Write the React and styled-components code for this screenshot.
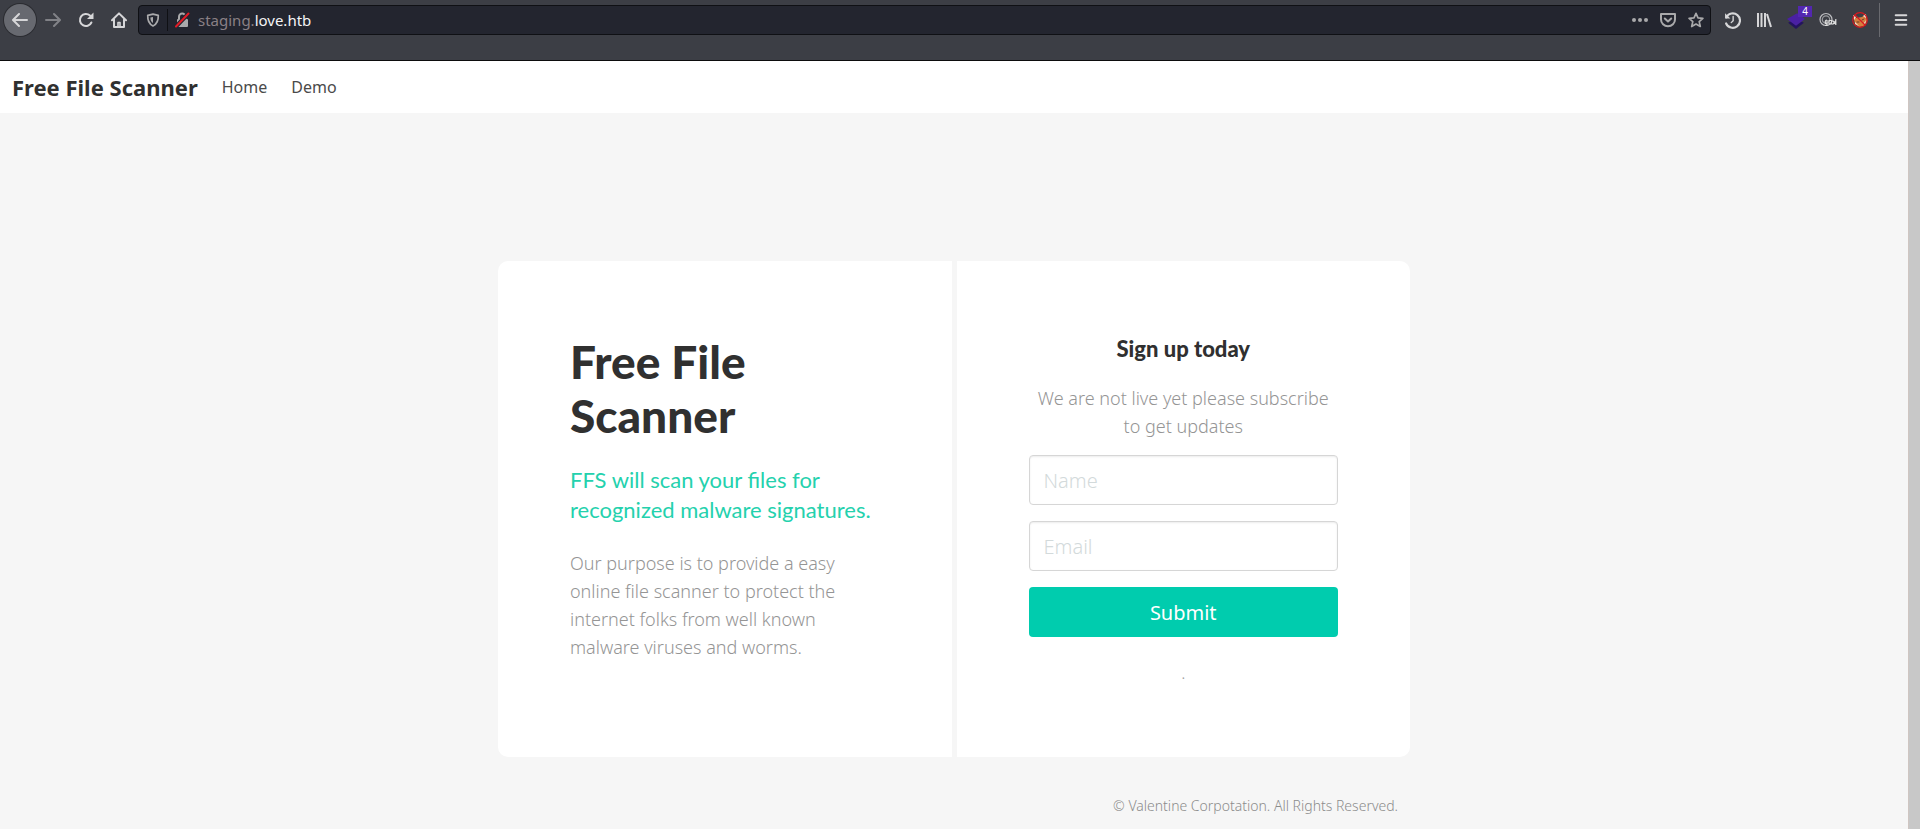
import React from "react";
import styled, { createGlobalStyle } from "styled-components";

const GlobalStyle = createGlobalStyle`
  * { box-sizing: border-box; }
  body { margin: 0; background: #f6f6f6; font-family: "Noto Sans", "Open Sans", sans-serif; color: #363636; }
  h1, h2, h3, p { margin: 0; }
  button { font: inherit; border: 0; background: none; padding: 0; cursor: pointer; }
`;

const Window = styled.div`
  min-height: 100vh;
  display: flex;
  flex-direction: column;
`;

const Toolbar = styled.header`
  display: flex;
  align-items: center;
  height: 61px;
  padding: 0 3px 20px 4px;
  background: #3c3e45;
  border-bottom: 1px solid #0c0c0d;
`;

const ToolButton = styled.button`
  display: flex;
  align-items: center;
  justify-content: center;
  flex: none;
  width: 32px;
  height: 32px;
  border-radius: 50%;
  position: relative;
  color: ${(p) => (p.$dim ? "#818287" : "#d6d6d8")};
  background: ${(p) => (p.$round ? "#676970" : "transparent")};
  box-shadow: ${(p) => (p.$round ? "0 0 0 1px #2b2c31" : "none")};
  svg { display: block; }
`;

const Navigation = styled.div`
  display: flex;
  align-items: center;
  gap: 1px;
`;

const Address = styled.div`
  flex: 1;
  display: flex;
  align-items: center;
  height: 30px;
  margin: 0 5px 0 3px;
  background: #23252f;
  border: 1px solid #0f1014;
  border-radius: 4px;
  color: #a9a9ab;
`;

const AddressButton = styled.button`
  display: flex;
  align-items: center;
  justify-content: center;
  width: 28px;
  height: 28px;
  color: inherit;
`;

const Split = styled.span`
  width: 1px;
  height: ${(p) => p.$height};
  margin: ${(p) => p.$margin || "0"};
  background: ${(p) => p.$color};
`;

const Url = styled.span`
  flex: 1;
  padding-left: 2px;
  font-size: 15px;
  line-height: 20px;
  color: #8a8085;
  b { font-weight: 400; color: #f4f4f6; }
`;

const Extensions = styled.div`
  display: flex;
  align-items: center;
  color: #d6d6d8;
`;

const Badge = styled.span`
  position: absolute;
  top: 2px;
  right: 0;
  width: 14px;
  height: 11px;
  background: #5327b0;
  color: #ffffff;
  font-size: 10px;
  line-height: 11px;
  text-align: center;
`;

const Viewport = styled.div`
  flex: 1;
  display: flex;
`;

const Scrollbar = styled.div`
  width: 12px;
  background: #c8c8c8;
  border-left: 1px solid #cfc6c2;
`;

const Page = styled.div`
  flex: 1;
  min-width: 0;
`;

const Navbar = styled.nav`
  display: flex;
  align-items: center;
  height: 52px;
  background: #ffffff;
`;

const Brand = styled.a`
  padding: 0 12px;
  font-size: 22px;
  line-height: 36px;
  font-weight: 700;
  color: #303030;
  text-decoration: none;
`;

const NavLink = styled.a`
  padding: 0 12px;
  font-size: 16px;
  line-height: 24px;
  color: #4a4a4a;
  text-decoration: none;
`;

const Hero = styled.main`
  max-width: 912px;
  margin: 0 auto;
  padding-top: 148px;
`;

const Columns = styled.div`
  display: grid;
  grid-template-columns: 1fr 1fr;
  gap: 5px;
  border-radius: 10px;
  overflow: hidden;
`;

const Panel = styled.section`
  padding: 74px 72px 70px;
  background: #ffffff;
  text-align: ${(p) => (p.$center ? "center" : "left")};
`;

const Title = styled.h1`
  font-family: Lato, sans-serif;
  font-size: 46px;
  line-height: 54px;
  font-weight: 900;
  color: #303030;
`;

const Subtitle = styled.h2`
  margin: 22px 0 24px;
  font-family: Lato, sans-serif;
  font-size: 22px;
  line-height: 30px;
  font-weight: 400;
  color: #24d1ad;
`;

const FormTitle = styled.h3`
  margin-bottom: 22px;
  font-family: Lato, sans-serif;
  font-size: 22px;
  line-height: 27px;
  font-weight: 900;
  color: #303030;
`;

const Text = styled.p`
  font-size: 18px;
  line-height: 28px;
  font-weight: 300;
  color: #959595;
`;

const Form = styled.form`
  display: flex;
  flex-direction: column;
  gap: 16px;
  margin: 15px 0 26px;
`;

const Field = styled.input`
  width: 100%;
  height: 50px;
  padding: 0 14px;
  border: 1px solid #d6d6d6;
  border-radius: 4px;
  box-shadow: inset 0 1px 2px rgba(10, 10, 10, 0.08);
  font-family: inherit;
  font-size: 20px;
  font-weight: 300;
  color: #363636;
  &::placeholder { color: #d3dadb; opacity: 1; }
`;

const Submit = styled.button`
  && {
    height: 50px;
    border-radius: 4px;
    background: #00ccae;
    color: #ffffff;
    font-size: 20px;
  }
`;

const Small = styled.p`
  font-size: 12px;
  line-height: 24px;
  color: #a0a0a0;
`;

const Footer = styled.footer`
  padding: 37px 12px 11px;
  text-align: right;
  font-size: 14px;
  line-height: 24px;
  font-weight: 300;
  color: #8c8c8c;
`;

const Icon = ({ size = 16, children }) => (
  <svg width={size} height={size} viewBox="0 0 16 16" fill="none" stroke="currentColor" strokeWidth="2" strokeLinecap="round" strokeLinejoin="round" aria-hidden="true">
    {children}
  </svg>
);

export default function App() {
  return (
    <>
      <GlobalStyle />
      <Window>
        <Toolbar>
          <Navigation>
            <ToolButton $round aria-label="Back">
              <Icon><path d="M15 8H1.5M7 2 1 8l6 6" /></Icon>
            </ToolButton>
            <ToolButton $dim aria-label="Forward">
              <Icon><path d="M1 8h13.5M9 2l6 6-6 6" /></Icon>
            </ToolButton>
            <ToolButton aria-label="Reload">
              <Icon>
                <path d="M13.4 10.5A6 6 0 1 1 12 3.6l2 2" />
                <path d="M15.500.5v6.500H9z" fill="currentColor" stroke="none" />
              </Icon>
            </ToolButton>
            <ToolButton aria-label="Home">
              <Icon>
                <path d="M1 8.3 8 1.4l7 6.900M3 7.500V15h10V7.500" />
                <path d="M7 15v-4.500h2V15" strokeWidth="1.600" />
              </Icon>
            </ToolButton>
          </Navigation>
          <Address>
            <AddressButton aria-label="Tracking protection">
              <Icon size={14}>
                <path d="M8 1.200 14 2.600c.3 6-1.300 10-6 12.200C3.300 12.600 1.700 8.600 2 2.600z" />
                <path d="M8 4.500v7C5.800 10 5 7.800 5 5z" fill="currentColor" stroke="none" />
              </Icon>
            </AddressButton>
            <Split $height="22px" $color="#0f1014" />
            <AddressButton aria-label="Connection is not secure">
              <Icon>
                <path d="M5 7V4.800a3.200 3.200 0 0 1 6.400 0V7" />
                <rect x="3" y="7" width="11" height="8" rx="1" fill="currentColor" stroke="none" />
                <path d="M2 14.500 14.500 1.500" stroke="#23252f" strokeWidth="4" />
                <path d="M2 14.500 14.500 1.500" stroke="#e31b26" />
              </Icon>
            </AddressButton>
            <Url>staging.<b>love.htb</b></Url>
            <AddressButton aria-label="Page actions">
              <Icon>
                <g fill="currentColor" stroke="none">
                  <circle cx="2" cy="8" r="2" />
                  <circle cx="8" cy="8" r="2" />
                  <circle cx="14" cy="8" r="2" />
                </g>
              </Icon>
            </AddressButton>
            <AddressButton aria-label="Save to Pocket">
              <Icon>
                <path d="M1 2h14v5.500a7 6.700 0 0 1-14 0z" />
                <path d="m4.800 6.500 3.200 3 3.200-3" />
              </Icon>
            </AddressButton>
            <AddressButton aria-label="Bookmark">
              <Icon>
                <path d="m8 1.400 2 4.500 4.900.5-3.700 3.200 1.100 4.900L8 12l-4.300 2.500 1.100-4.900L1.100 6.400 6 5.900z" strokeWidth="1.700" />
              </Icon>
            </AddressButton>
          </Address>
          <Extensions>
            <ToolButton aria-label="History">
              <Icon size={17}>
                <path d="M2.200 5A6.800 6.800 0 1 1 2 10.800" />
                <path d="M1 1.200V6h5z" fill="currentColor" stroke="none" />
                <path d="M8.600 4.200v4L6.800 10" strokeWidth="1.300" />
              </Icon>
            </ToolButton>
            <ToolButton aria-label="Library">
              <Icon>
                <path d="M2 1v14M5.500 1v14M9 1v14M11 2l4 13" strokeLinecap="butt" />
              </Icon>
            </ToolButton>
            <ToolButton aria-label="Page technologies">
              <Icon size={18}>
                <g stroke="none">
                  <path d="M1 10.500 8 7l7 3.500-7 5.500z" fill="#24135f" />
                  <path d="M0 7 9 2l7 5-8 6z" fill="#4a20a3" />
                </g>
              </Icon>
              <Badge>4</Badge>
            </ToolButton>
            <ToolButton aria-label="Proxy switcher">
              <svg width="18" height="16" viewBox="0 0 18 16" aria-hidden="true">
                <circle cx="7" cy="7.500" r="6" fill="none" stroke="#bdbdc0" strokeWidth="1.200" />
                <circle cx="7" cy="7.500" r="3.700" fill="none" stroke="#98999d" strokeWidth="1.200" />
                <path d="M8 8a1.800 2 0 1 0 0 4V8v5.500H6M10 12V8.500h2.500V12H10M13.500 8.500l3.500 4m0-4-3.500 4M16.800 7v6" fill="none" stroke="#dcdcdc" strokeWidth="1.200" />
              </svg>
            </ToolButton>
            <ToolButton aria-label="Proxy off">
              <Icon>
                <path d="m1 3 3 3 6-1 4-3 1 7-3 5-5 1-4-3z" fill="#d6803f" stroke="none" />
                <path d="m1 3 3 2-2 3zm10 1 3-2v4zM3 10l4 4-4-2zm9 1 2-3-1 5z" fill="#f3ded0" stroke="none" />
                <path d="M5 10h2m3-2 2-1" stroke="#6b3827" strokeWidth="1" />
                <circle cx="8" cy="8" r="7.300" stroke="#d9171f" strokeWidth="1.200" />
                <path d="m3 3 10 10" stroke="#d9171f" strokeWidth="1.200" />
              </Icon>
            </ToolButton>
            <Split $height="34px" $margin="0 5px 0 3px" $color="#696a6f" />
            <ToolButton aria-label="Menu">
              <Icon size={14}><path d="M2 2.500h12M2 8h12M2 13.500h12" strokeWidth="2.400" /></Icon>
            </ToolButton>
          </Extensions>
        </Toolbar>
        <Viewport>
          <Page>
            <Navbar>
              <Brand href="#">Free File Scanner</Brand>
              <NavLink href="#home">Home</NavLink>
              <NavLink href="#demo">Demo</NavLink>
            </Navbar>
            <Hero>
              <Columns>
                <Panel>
                  <Title>Free File Scanner</Title>
                  <Subtitle>FFS will scan your files for recognized malware signatures.</Subtitle>
                  <Text>
                    Our purpose is to provide a easy online file scanner to protect the internet folks from well known
                    malware viruses and worms.
                  </Text>
                </Panel>
                <Panel $center>
                  <FormTitle>Sign up today</FormTitle>
                  <Text>We are not live yet please subscribe to get updates</Text>
                  <Form onSubmit={(e) => e.preventDefault()}>
                    <Field type="text" placeholder="Name" aria-label="Name" />
                    <Field type="email" placeholder="Email" aria-label="Email" />
                    <Submit type="submit">Submit</Submit>
                  </Form>
                  <Small>.</Small>
                </Panel>
              </Columns>
              <Footer>© Valentine Corpotation. All Rights Reserved.</Footer>
            </Hero>
          </Page>
          <Scrollbar />
        </Viewport>
      </Window>
    </>
  );
}
